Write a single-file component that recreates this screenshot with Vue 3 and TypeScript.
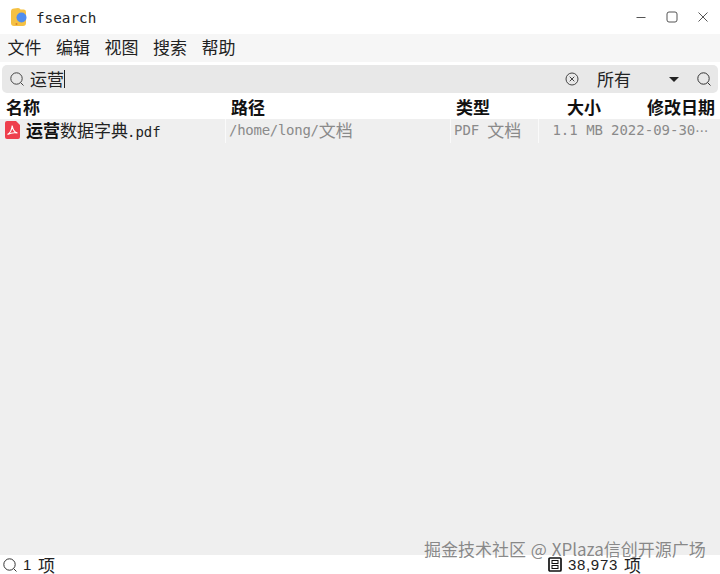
<script setup lang="ts">
const menus: string[] = ['文件', '编辑', '视图', '搜索', '帮助']
</script>

<template>
  <div class="win">
    <header class="title">
      <svg class="logo" width="18" height="20" viewBox="0 0 18 20">
        <path d="M1 4.5Q1 1.5 4 1.5L8 1Q10 1 10.5 2.5L14 2.5Q16 2.5 16 5V16Q16 19 13 19H4Q1 19 1 16Z" fill="#f5c143" />
        <circle cx="11.5" cy="10.5" r="5" fill="#4f8df0" />
        <circle cx="6.5" cy="17" r="1" fill="#d9822b" />
      </svg>
      <span class="app">fsearch</span>
      <div class="controls">
        <svg width="12" height="12" viewBox="0 0 12 12"><path d="M1.5 6.5H10.5" stroke="#555" fill="none" /></svg>
        <svg width="12" height="12" viewBox="0 0 12 12"><rect x="1" y="1" width="10" height="10" rx="2" stroke="#555" fill="none" /></svg>
        <svg width="12" height="12" viewBox="0 0 12 12"><path d="M1.5 1.5L10.5 10.5M10.5 1.5L1.5 10.5" stroke="#555" fill="none" /></svg>
      </div>
    </header>

    <nav class="menu">
      <span v-for="m in menus" :key="m">{{ m }}</span>
    </nav>

    <div class="searchwrap">
      <div class="search">
        <svg class="glass" width="16" height="16" viewBox="0 0 16 16"><circle cx="7.5" cy="7.5" r="5.7" stroke="#444" fill="none" /><path d="M11.7 11.7L14.5 14.5" stroke="#444" /></svg>
        <span class="query">运营</span>
        <span class="caret"></span>
        <svg class="clear" width="14" height="14" viewBox="0 0 14 14"><circle cx="7" cy="7" r="6" stroke="#444" fill="none" /><path d="M4.7 4.7L9.3 9.3M9.3 4.7L4.7 9.3" stroke="#444" fill="none" /></svg>
        <span class="filter">所有</span>
        <span class="tri"></span>
        <svg class="go" width="16" height="16" viewBox="0 0 16 16"><circle cx="7.5" cy="7.5" r="5.7" stroke="#333" fill="none" /><path d="M11.7 11.7L14.5 14.5" stroke="#333" /></svg>
      </div>
    </div>

    <div class="cols head">
      <span class="c1">名称</span>
      <span class="c2">路径</span>
      <span class="c3">类型</span>
      <span class="c4">大小</span>
      <span class="c5">修改日期</span>
    </div>

    <main class="list">
      <div class="cols row">
        <span class="c1 name">
          <svg class="pdf" width="15" height="18" viewBox="0 0 15 18">
            <path d="M2 0H11L15 4V16Q15 18 13 18H2Q0 18 0 16V2Q0 0 2 0Z" fill="#ee3f4c" />
            <path d="M2.5 13.5C5 12 6.8 9 7.2 4.5C7.8 9 9.8 11.5 12.5 12C9.5 11.5 5.5 12 2.5 13.5Z" stroke="#fff" stroke-width="1.1" fill="none" />
          </svg>
          <span class="fn"><b>运营</b>数据字典<i class="ext">.pdf</i></span>
        </span>
        <span class="c2 cell"><i class="path">/home/long/</i><span class="cjk">文档</span></span>
        <span class="c3 cell"><i class="type">PDF</i><span class="cjk">文档</span></span>
        <span class="c4 cell"><i>1.1 MB</i></span>
        <span class="c5 cell"><i>2022-09-30</i><span class="dots">⋯</span></span>
      </div>
    </main>

    <footer class="status">
      <span class="left">
        <svg width="16" height="16" viewBox="0 0 16 16"><circle cx="7.5" cy="7.5" r="5.7" stroke="#333" fill="none" /><path d="M11.7 11.7L14.5 14.5" stroke="#333" /></svg>
        <span class="num">1</span><span>项</span>
      </span>
      <span class="right">
        <svg width="14" height="15" viewBox="0 0 14 15"><rect x="1" y="1" width="12" height="13" rx="1" stroke="#111" stroke-width="1.7" fill="none" /><rect x="4" y="3.5" width="6" height="3" stroke="#111" fill="none" /><rect x="4" y="8.5" width="6" height="3" stroke="#111" fill="none" /></svg>
        <span class="num">38,973</span><span>项</span>
      </span>
      <span class="mark">掘金技术社区 @ XPlaza信创开源广场</span>
    </footer>
  </div>
</template>

<style>
html, body { margin: 0; background: #fff; }
</style>

<style scoped>
.win {
  width: 720px;
  height: 574px;
  display: flex;
  flex-direction: column;
  position: relative;
  background: #fff;
  color: #222;
  font: 17px "Noto Sans CJK SC", sans-serif;
}
i { font-style: normal; font-family: "DejaVu Sans Mono", monospace; font-size: 14px; }
.title { height: 34px; flex: none; display: flex; align-items: center; padding: 0 11px 0 10px; }
.logo { margin-right: 8px; }
.app { font: 14.3px "DejaVu Sans Mono", monospace; position: relative; top: 1px; }
.controls { margin-left: auto; display: flex; gap: 19px; }
.menu { height: 28px; box-sizing: border-box; padding: 0 0 4px 7.5px; flex: none; display: flex; align-items: center; gap: 14.5px; background: #f6f6f6; line-height: 1; }
.searchwrap { height: 34px; flex: none; padding: 3px 2px; box-sizing: border-box; }
.search { height: 28px; border-radius: 5px; background: #e8e8e8; display: flex; align-items: center; padding: 0 6px 0 7px; line-height: 1; }
.query { margin-left: 5px; padding-bottom: 2px; }
.caret { width: 1px; height: 18px; background: #222; }
.clear { margin-left: auto; margin-right: 0; position: relative; left: -2px; }
.filter { margin-left: 16px; width: 72px; padding-bottom: 2px; }
.tri { width: 0; height: 0; border: 5px solid transparent; border-top: 5px solid #222; border-bottom: 0; margin-right: 17px; }
.cols { display: grid; grid-template-columns: 225px 225px 88px 72px 110px; }
.head { height: 23px; box-sizing: border-box; padding-bottom: 3px; flex: none; align-items: center; font-weight: 700; color: #111; line-height: 1; }
.head .c1, .head .c2, .head .c3 { padding-left: 6px; }
.head .c4 { text-align: right; padding-right: 9px; }
.head .c5 { text-align: right; padding-right: 5px; }
.list { flex: 1; background: #efefef; }
.row { height: 24px; align-items: center; line-height: 1; }
.name { display: flex; align-items: center; padding: 0 0 2px 5px; box-sizing: border-box; height: 24px; }
.pdf { flex: none; }
.fn { margin-left: 6px; color: #222; white-space: nowrap; }
.fn b { font-weight: 700; color: #111; }
.ext { margin-left: -1px; }
.cell { color: #8a8a8a; height: 24px; display: flex; align-items: center; border-left: 1px solid #fafafa; padding-left: 3px; white-space: nowrap; box-sizing: border-box; padding-bottom: 2px; }
.cjk { position: relative; top: -1px; }
.path { letter-spacing: -0.27px; }
.type { margin-right: 8px; }
.c4.cell { justify-content: flex-end; padding-right: 7px; }
.c5.cell { border-left: 0; padding-left: 1px; }
.dots { font-size: 13px; letter-spacing: 0; }
.status { height: 19px; flex: none; display: flex; align-items: center; justify-content: space-between; padding: 0 79px 0 2px; line-height: 1; color: #222; }
.left, .right { display: flex; align-items: center; }
.num { font: 15px "Liberation Sans", sans-serif; margin: 0 6px 0 5px; letter-spacing: 0.7px; }
.left .num { margin: 0 6px 0 5px; }
.right .num { margin-left: 6px; }
.mark { position: absolute; left: 424px; top: 540px; color: rgba(130, 130, 130, 0.95); line-height: 17px; white-space: nowrap; word-spacing: 1px; }
</style>
